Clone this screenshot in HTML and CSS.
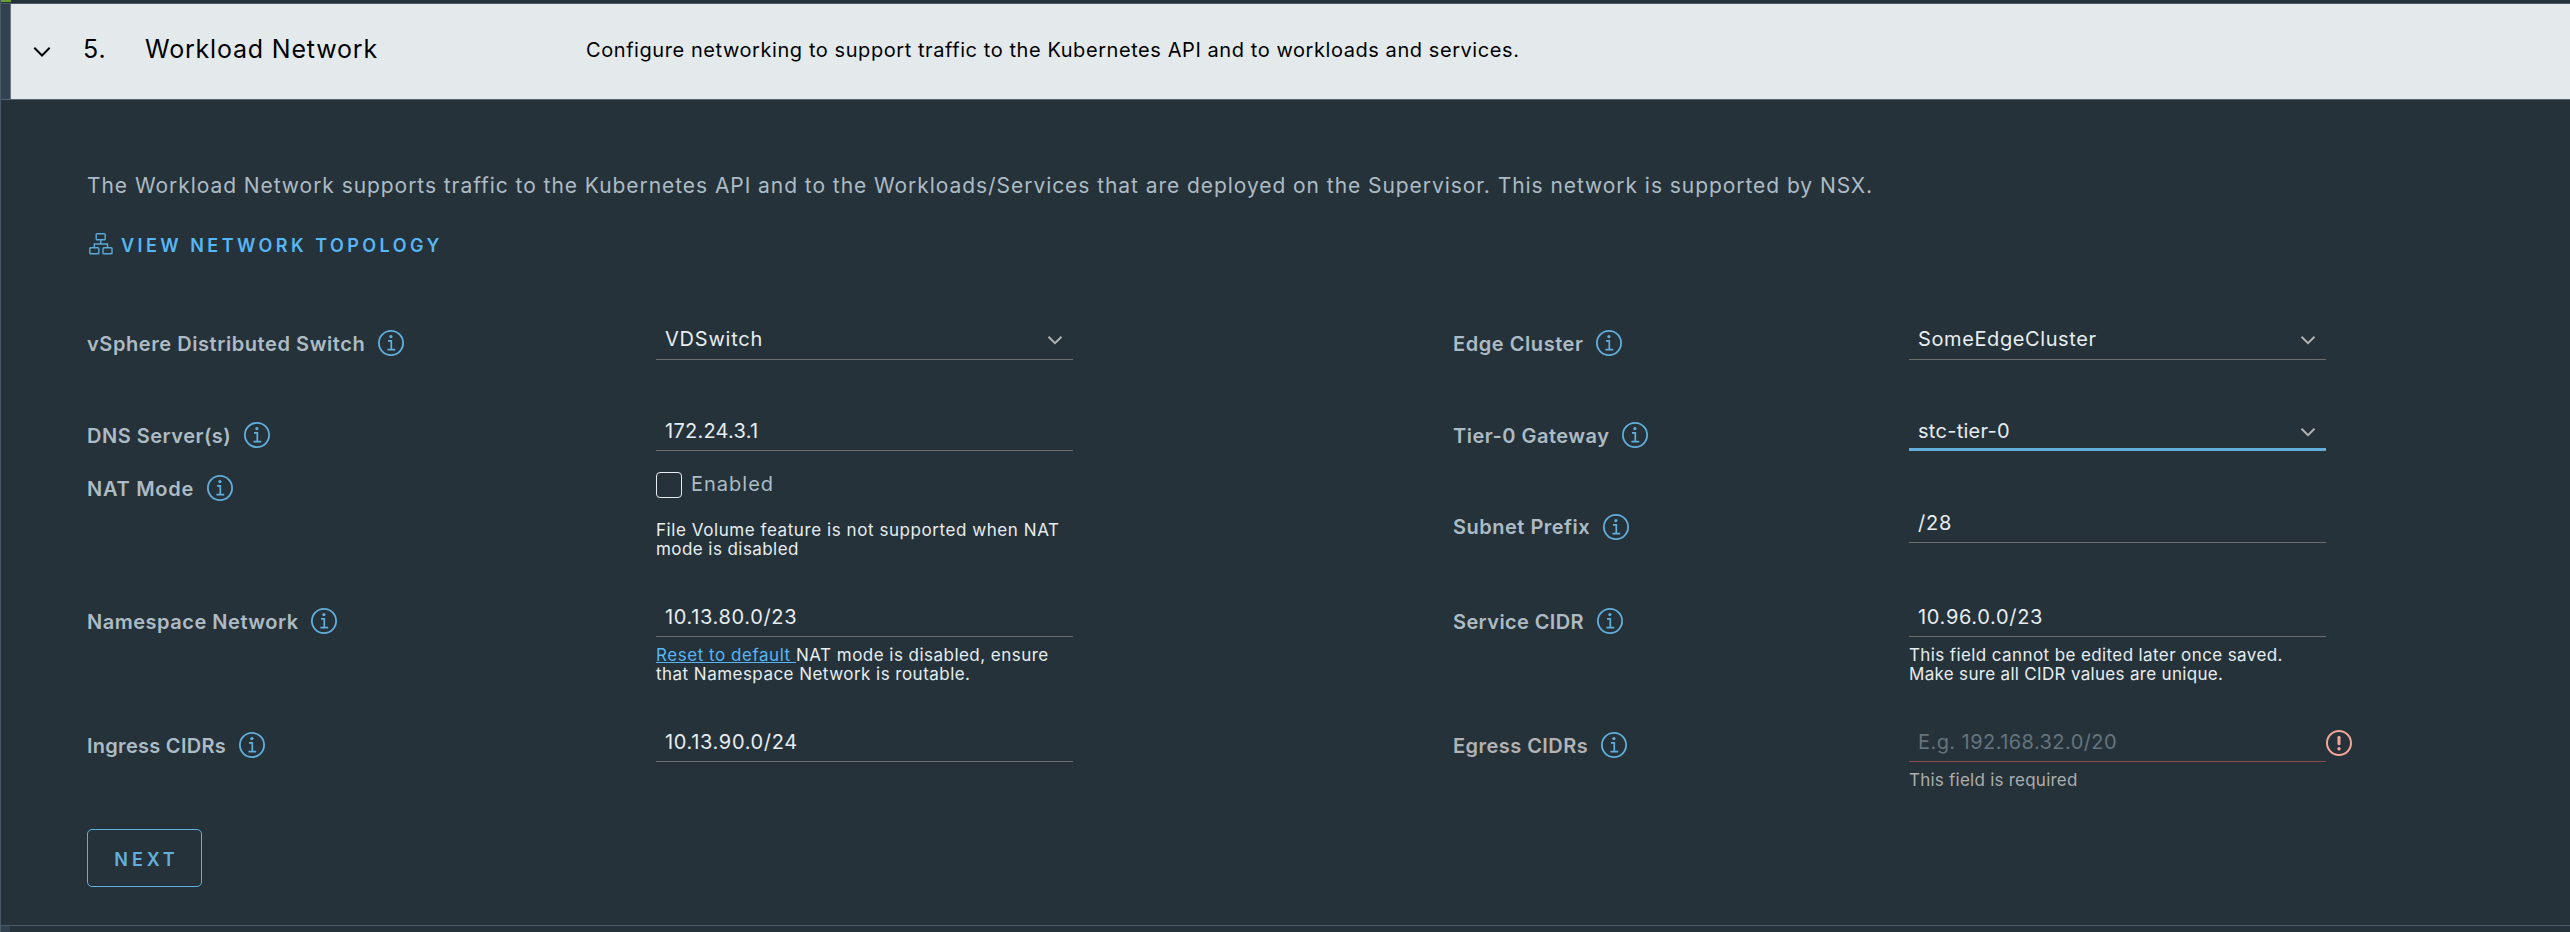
FILE: index.html
```html
<!DOCTYPE html>
<html lang="en">
<head>
<meta charset="utf-8">
<title>Workload Network</title>
<link rel="stylesheet" href="styles.css">
</head>
<body>
<svg class="defs" aria-hidden="true">
  <symbol id="info" viewBox="0 0 26 26">
    <circle cx="13" cy="13" r="12.1" fill="none" stroke="currentColor" stroke-width="1.8"/>
    <circle cx="12.9" cy="6.6" r="1.6" fill="currentColor"/>
    <path d="M10 10.9h3.3v8.7M9.4 19.7h7.8" fill="none" stroke="currentColor" stroke-width="1.7"/>
  </symbol>
  <symbol id="caret" viewBox="0 0 16 10">
    <path d="M1.5 1.7L8 8.1l6.500-6.400" fill="none" stroke="currentColor" stroke-width="2"/>
  </symbol>
</svg>
<div class="wizard">
  <div class="previous"><span class="done"></span></div>
  <header class="step-header">
    <span class="status"></span>
    <svg class="toggle" viewBox="0 0 18 12"><path d="M1.300 1.800L9 9.500l7.700-7.700" fill="none" stroke="currentColor" stroke-width="2"/></svg>
    <span class="step-number">5.</span>
    <h1 class="step-title">Workload Network</h1>
    <p class="step-summary">Configure networking to support traffic to the Kubernetes API and to workloads and services.</p>
  </header>
  <main class="step-body">
    <p class="intro">The Workload Network supports traffic to the Kubernetes API and to the Workloads/Services that are deployed on the Supervisor. This network is supported by NSX.</p>
    <a class="topology">
      <svg class="topology-icon" viewBox="0 0 24 22" fill="none" stroke="currentColor" stroke-width="1.400"><rect x="7.200" y=".8" width="9" height="5.900" rx=".8"/><rect x=".8" y="14.800" width="9" height="5.900" rx=".8"/><rect x="14" y="14.800" width="9" height="5.900" rx=".8"/><path d="M11.700 7v4M5.300 14.500V11h13.200v3.500"/></svg>
      <span>VIEW NETWORK TOPOLOGY</span>
    </a>
    <div class="form">
      <section class="column">
        <div class="row">
          <div class="label"><span class="t-switch">vSphere Distributed Switch</span><svg class="info"><use href="#info"/></svg></div>
          <div class="field"><div class="control select"><span class="v-switch">VDSwitch</span><svg class="caret"><use href="#caret"/></svg></div></div>
        </div>
        <div class="row dns">
          <div class="label"><span class="t-dns">DNS Server(s)</span><svg class="info"><use href="#info"/></svg></div>
          <div class="field"><div class="control"><span class="v-dns">172.24.3.1</span></div></div>
        </div>
        <div class="row nat">
          <div class="label"><span class="t-nat">NAT Mode</span><svg class="info"><use href="#info"/></svg></div>
          <div class="field">
            <div class="check"><span class="box"></span><span>Enabled</span></div>
            <p class="help nat-help"><span class="h-file">File Volume feature is not supported when NAT</span><br><span class="h-mode">mode is disabled</span></p>
          </div>
        </div>
        <div class="row tall">
          <div class="label"><span class="t-namespace">Namespace Network</span><svg class="info"><use href="#info"/></svg></div>
          <div class="field">
            <div class="control"><span class="v-namespace">10.13.80.0/23</span></div>
            <p class="help h-route"><a class="reset">Reset to default </a>NAT mode is disabled, ensure<br>that Namespace Network is routable.</p>
          </div>
        </div>
        <div class="row last">
          <div class="label"><span class="t-ingress">Ingress CIDRs</span><svg class="info"><use href="#info"/></svg></div>
          <div class="field"><div class="control"><span class="v-namespace">10.13.90.0/24</span></div></div>
        </div>
      </section>
      <section class="column">
        <div class="row">
          <div class="label"><span class="t-edge">Edge Cluster</span><svg class="info"><use href="#info"/></svg></div>
          <div class="field"><div class="control select"><span class="v-edge">SomeEdgeCluster</span><svg class="caret"><use href="#caret"/></svg></div></div>
        </div>
        <div class="row">
          <div class="label"><span class="t-tier">Tier-0 Gateway</span><svg class="info"><use href="#info"/></svg></div>
          <div class="field"><div class="control focused"><span class="v-tier">stc-tier-0</span><svg class="caret"><use href="#caret"/></svg></div></div>
        </div>
        <div class="row subnet">
          <div class="label"><span class="t-subnet">Subnet Prefix</span><svg class="info"><use href="#info"/></svg></div>
          <div class="field"><div class="control"><span class="v-subnet">/28</span></div></div>
        </div>
        <div class="row tall">
          <div class="label"><span class="t-service">Service CIDR</span><svg class="info"><use href="#info"/></svg></div>
          <div class="field">
            <div class="control"><span class="v-service">10.96.0.0/23</span></div>
            <p class="help"><span class="h-edit">This field cannot be edited later once saved.</span><br><span class="h-unique">Make sure all CIDR values are unique.</span></p>
          </div>
        </div>
        <div class="row last">
          <div class="label muted"><span class="t-egress">Egress CIDRs</span><svg class="info"><use href="#info"/></svg></div>
          <div class="field">
            <div class="control invalid"><span class="placeholder">E.g. 192.168.32.0/20</span></div>
            <p class="help required">This field is required</p>
          </div>
          <svg class="error" viewBox="0 0 26 26"><circle cx="13" cy="13" r="12" fill="none" stroke="currentColor" stroke-width="2"/><path d="M13 7.200v6.600" stroke="currentColor" stroke-width="3" stroke-linecap="round"/><circle cx="13" cy="18.700" r="1.700" fill="currentColor"/></svg>
        </div>
      </section>
    </div>
    <button class="next">NEXT</button>
  </main>
  <footer class="following"><span class="status"></span></footer>
</div>
</body>
</html>
```

FILE: styles.css
```css
* { box-sizing: border-box; }
body { margin: 0; background: #25323a; color: #adbbc4; font-family: Inter, "Liberation Sans", sans-serif; overflow: hidden; }
h1, p { margin: 0; font-weight: 400; }
svg { display: block; flex: none; }
.defs { display: none; }
.wizard { height: 932px; border-left: 1px solid #495967; display: flex; flex-direction: column; }
.previous { height: 3px; flex: none; }
.done { display: block; width: 10px; height: 2px; background: #6a9f32; }
.step-header { height: 97px; flex: none; display: flex; border-top: 1px solid #495967; border-bottom: 1px solid #566570; background: #e4eaec; color: #000; line-height: 30px; }
.status { width: 10px; background: #324250; border-right: 1px solid #66757f; }
.toggle { width: 18px; height: 12px; margin: 42px 0 0 22px; }
.step-number { width: 62px; margin: 30px 0 0 32px; font-size: 25px; letter-spacing: .97px; }
.step-title { width: 441px; margin-top: 30px; font-size: 25px; letter-spacing: .81px; }
.step-summary { margin-top: 31px; font-size: 20px; letter-spacing: .57px; }
.step-body { height: 826px; flex: none; padding: 70px 0 0 86px; border-bottom: 1px solid #495967; }
.intro { font-size: 21px; line-height: 31px; letter-spacing: .942px; white-space: nowrap; }
.topology { display: flex; align-items: center; gap: 8px; width: 400px; margin-top: 29px; padding-left: 2px; color: #57b6f5; font-size: 18px; font-weight: 600; letter-spacing: 3.46px; line-height: 31px; white-space: nowrap; }
.topology-icon { width: 24px; height: 22px; margin-bottom: 3px; color: #5ba9d6; }
.form { display: grid; grid-template-columns: 1366px 1fr; height: 568px; padding-top: 63px; }
.row { display: flex; height: 92px; }
.dns { height: 53px; }
.nat { height: 133px; }
.tall { height: 125px; }
.subnet { height: 94px; }
.label { display: flex; align-items: center; width: 569px; height: 38px; font-size: 20px; font-weight: 600; line-height: 38px; gap: 12.600px; white-space: nowrap; }
.label span { padding-top: 2px; }
.column + .column .label { width: 456px; }
.last .label { height: 36px; line-height: 36px; }
.subnet .label { height: 37px; line-height: 37px; }
.label.muted { color: #b3b3b3; }
.info { width: 26px; height: 26px; color: #62afdc; }
.field { width: 417px; }
.control { display: flex; justify-content: space-between; height: 35px; padding: 0 10px 0 9px; border-bottom: 1px solid #6d6d6c; color: #e7edf0; font-size: 20px; line-height: 30px; }
.select { height: 36px; }
.focused { border-bottom: 3px solid #62afdc; }
.invalid { border-color: #8b4c4c; }
.caret { width: 16px; height: 10px; margin-top: 11px; color: #b3b3b3; }
.placeholder { color: #65747d; letter-spacing: .436px; }
.check { display: flex; gap: 9px; height: 30px; font-size: 20px; letter-spacing: 1px; line-height: 30px; }
.box { width: 26px; height: 26px; margin-top: 3px; border: 1px solid #e7edf0; border-radius: 4px; }
.help { margin-top: 9px; color: #e7edf0; font-size: 17px; line-height: 19px; white-space: nowrap; }
.nat-help { margin-top: 22px; }
.reset { color: #57b6f5; text-decoration: underline; letter-spacing: .54px; }
.required { color: #adadad; letter-spacing: .237px; }
.error { width: 26px; height: 26px; margin-top: 3px; color: #f4a698; }
.next { display: block; width: 115px; height: 58px; padding: 2px 0 0 4px; border: 1px solid #62afdc; border-radius: 5px; background: none; color: #62afdc; font: 600 18px/56px Inter, sans-serif; letter-spacing: 3.900px; }
.following { height: 6px; flex: none; display: flex; }
.following .status { border-color: #25323a; }
.t-switch { letter-spacing: .57px; }
.t-dns { letter-spacing: .5px; }
.t-nat { letter-spacing: .738px; }
.t-namespace { letter-spacing: .52px; }
.t-ingress { letter-spacing: .28px; }
.t-edge { letter-spacing: .558px; }
.t-tier { letter-spacing: .5px; }
.t-subnet { letter-spacing: .5px; }
.t-service { letter-spacing: .39px; }
.t-egress { letter-spacing: .46px; }
.v-switch { letter-spacing: .779px; }
.v-dns { letter-spacing: .255px; }
.v-namespace { letter-spacing: .65px; }
.v-edge { letter-spacing: .604px; }
.v-tier { letter-spacing: .276px; }
.v-subnet { letter-spacing: .798px; }
.v-service { letter-spacing: .669px; }
.h-file { letter-spacing: .567px; }
.h-mode { letter-spacing: .431px; }
.h-route { letter-spacing: .47px; }
.h-edit { letter-spacing: .393px; }
.h-unique { letter-spacing: .314px; }
```
